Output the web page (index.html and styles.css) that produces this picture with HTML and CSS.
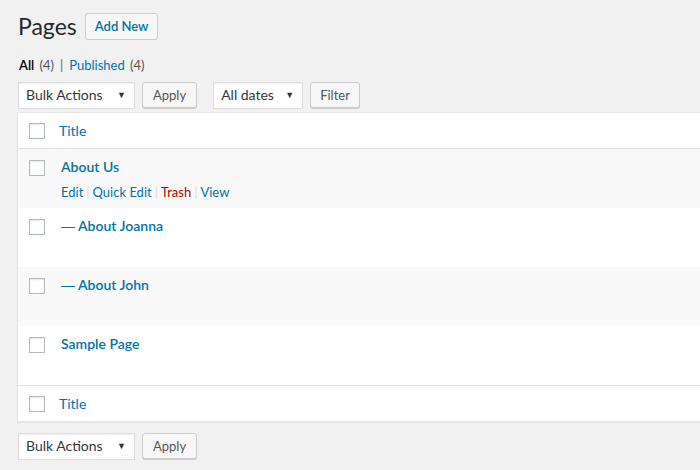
FILE: index.html
```html
<!DOCTYPE html>
<html>
<head>
<meta charset="utf-8">
<link rel="stylesheet" href="styles.css">
</head>
<body>
<div class="wrap">
  <div class="heading">
    <h1>Pages</h1>
    <a class="btn add-new">Add New</a>
  </div>
  <div class="subsub">
    <a class="current">All <span class="count">(4)</span></a>
    <span class="sep">|</span>
    <a>Published <span class="count">(4)</span></a>
  </div>
  <div class="tablenav">
    <div class="select bulk">Bulk Actions<span class="arrow">▼</span></div>
    <a class="btn plain">Apply</a>
    <div class="select dates">All dates<span class="arrow">▼</span></div>
    <a class="btn plain filter">Filter</a>
  </div>
  <div class="table">
    <div class="row head">
      <span class="cb"></span>
      <a class="col-title">Title</a>
    </div>
    <div class="row alt">
      <span class="cb"></span>
      <div class="cell">
        <a class="title">About Us</a>
        <div class="actions"><a>Edit</a><span class="bar">|</span><a>Quick Edit</a><span class="bar">|</span><a class="trash">Trash</a><span class="bar">|</span><a>View</a></div>
      </div>
    </div>
    <div class="row">
      <span class="cb"></span>
      <div class="cell"><a class="title"><span class="dash">—</span> About Joanna</a></div>
    </div>
    <div class="row alt">
      <span class="cb"></span>
      <div class="cell"><a class="title"><span class="dash">—</span> About John</a></div>
    </div>
    <div class="row">
      <span class="cb"></span>
      <div class="cell"><a class="title">Sample Page</a></div>
    </div>
    <div class="row head foot">
      <span class="cb"></span>
      <a class="col-title">Title</a>
    </div>
  </div>
  <div class="tablenav bottom">
    <div class="select bulk">Bulk Actions<span class="arrow">▼</span></div>
    <a class="btn plain">Apply</a>
  </div>
</div>
</body>
</html>
```

FILE: styles.css
```css
html, body {
  margin: 0;
  padding: 0;
  overflow: hidden;
}
body {
  background: #f1f1f1;
  color: #444;
  font-family: "Segoe UI", Lato, "Noto Sans", sans-serif;
  font-size: 13px;
  line-height: 1.4;
}
a { color: #0073aa; text-decoration: none; }
.wrap {
  padding: 13px 0 0 17px;
  margin-right: -30px;
}
.heading {
  display: flex;
  align-items: center;
  gap: 8px;
}
h1 {
  margin: 0 0 0 1px;
  font-size: 23px;
  font-weight: 400;
  color: #23282d;
  line-height: 27px;
}
.btn {
  display: inline-flex;
  align-items: center;
  box-sizing: border-box;
  border: 1px solid #ccc;
  border-radius: 3px;
  background: #f7f7f7;
  height: 27px;
  padding: 0 9px;
}
.add-new {
  height: 27px;
  font-weight: 600;
  color: #0073aa;
  padding: 0 9px;
}
.plain {
  color: #555;
  box-shadow: 0 1px 0 #ccc;
  height: 26px;
  padding: 0 10px;
}
.plain.filter { padding: 0 9px; }
.subsub {
  margin: 14px 0 0 2px;
  display: flex;
  gap: 5px;
  height: 22px;
  align-items: center;
}
.subsub .current { color: #000; font-weight: 600; }
.count { color: #555; font-weight: 400; margin-left: 2px; }
.sep { color: #666; margin: 0 1px; }
.tablenav {
  display: flex;
  align-items: center;
  gap: 7px;
  margin: 5px 0 0 1px;
  height: 28px;
}
.select {
  box-sizing: border-box;
  height: 27px;
  border: 1px solid #ddd;
  background: #fff;
  box-shadow: inset 0 1px 2px rgba(0,0,0,.07);
  color: #32373c;
  display: flex;
  align-items: center;
  justify-content: space-between;
  padding: 0 8px 0 7px;
  font-size: 14px;
}
.select .arrow { font-size: 9px; color: #333; }
.bulk { width: 117px; }
.dates { width: 90px; margin-left: 9px; }
.table {
  margin-top: 3px;
  background: #fff;
  border: 1px solid #e5e5e5;
  box-shadow: 0 1px 1px rgba(0,0,0,.04);
}
.row {
  display: flex;
  align-items: flex-start;
  height: 59px;
  box-sizing: border-box;
  padding: 10px 0 0 11px;
}
.row.alt { background: #f9f9f9; }
.row.head {
  height: 36px;
  align-items: center;
  padding-top: 0;
  border-bottom: 1px solid #e1e1e1;
}
.row.foot {
  border-bottom: none;
  border-top: 1px solid #e1e1e1;
}
.cb {
  flex: none;
  box-sizing: border-box;
  width: 16px;
  height: 16px;
  border: 1px solid #b4b9be;
  background: #fff;
  box-shadow: inset 0 1px 2px rgba(0,0,0,.1);
}
.row:not(.head) .cb { margin-top: 1px; }
.col-title { margin-left: 14px; font-size: 14px; }
.cell { margin-left: 16px; margin-top: -1px; }
.title { font-weight: 600; font-size: 14px; line-height: 18px; }
.dash { font-family: "Liberation Sans", sans-serif; font-weight: 400; }
.actions { margin-top: 7px; font-size: 13px; }
.actions .bar { color: #ddd; margin: 0 3px; }
.actions .trash { color: #a00; }
.bottom { margin-top: 10px; }
```
